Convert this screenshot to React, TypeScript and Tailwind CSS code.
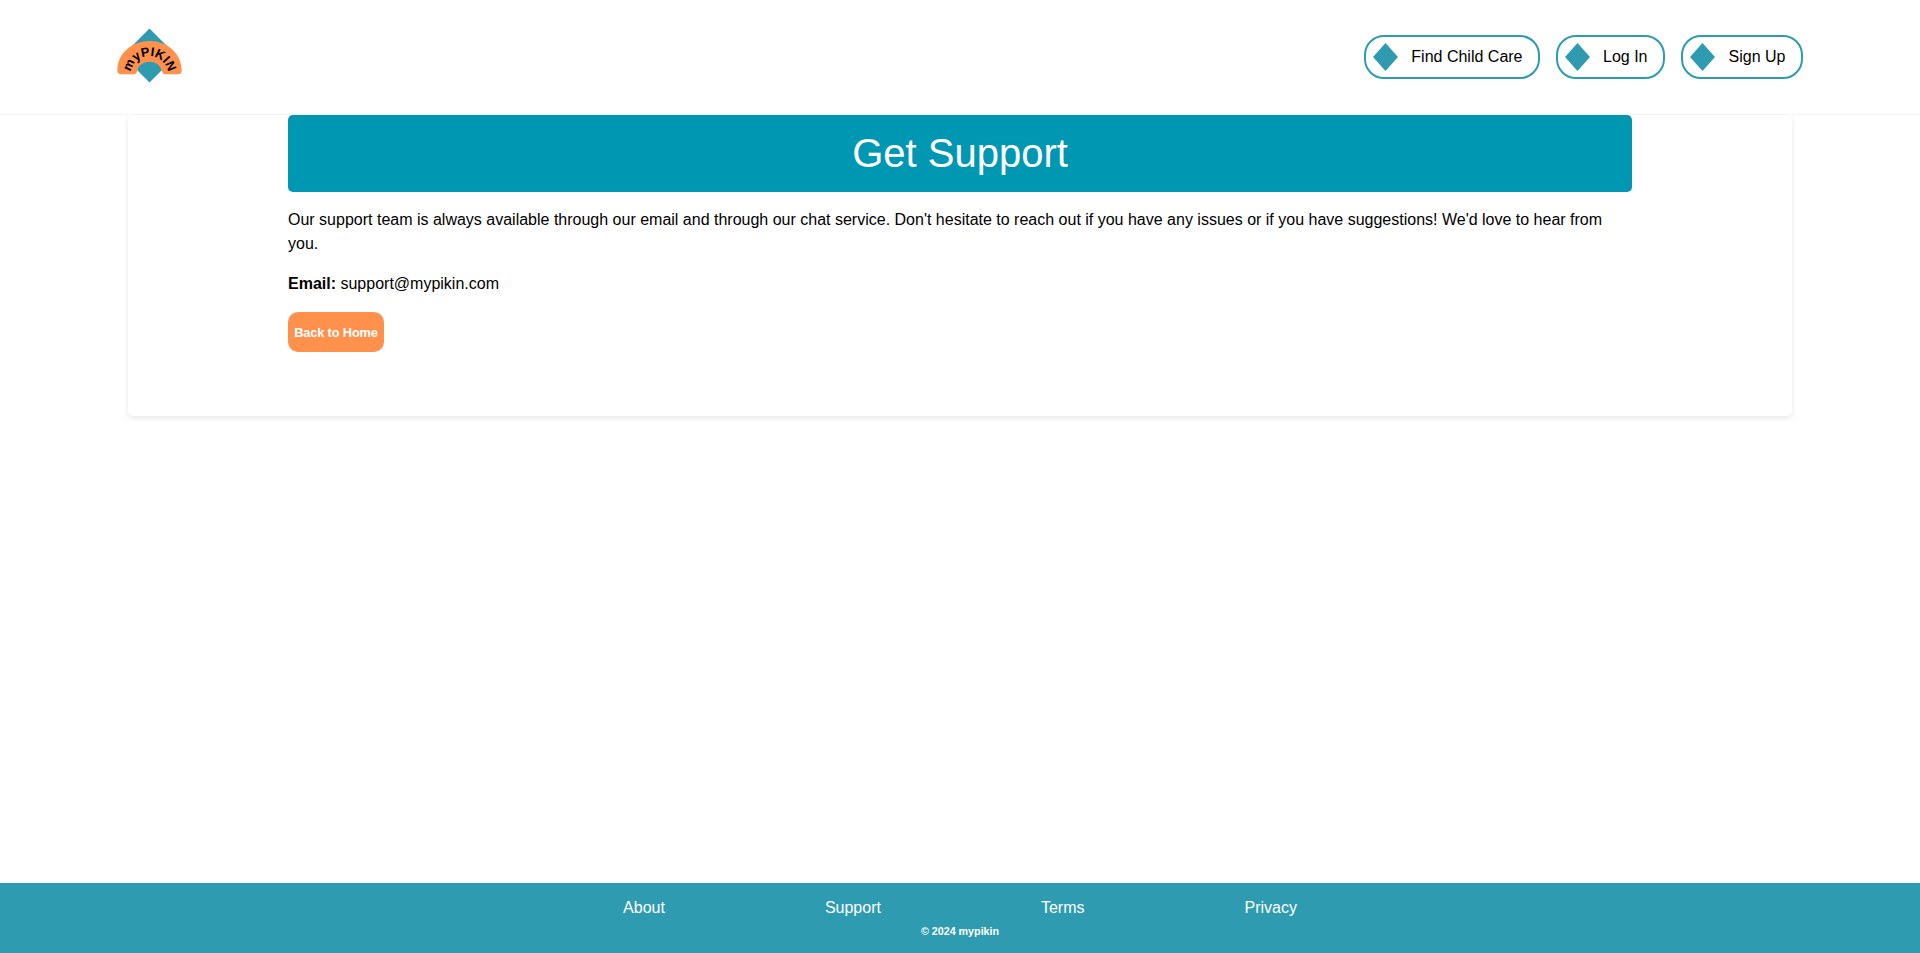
const navItems = [
  { label: "Find Child Care", width: "w-[176px]" },
  { label: "Log In", width: "w-[109px]" },
  { label: "Sign Up", width: "w-[122px]" },
];

const footerLinks = ["About", "Support", "Terms", "Privacy"];

function Logo() {
  return (
    <svg width="66" height="58" viewBox="116 27 66 58" role="img" aria-label="myPIKIN">
      <path d="M149.5 28.6 176.5 55.6 149.5 82.6 122.5 55.6Z" fill="#2f9bb0" />
      <path
        d="M121 74.3Q117.3 74.3 117.3 70C117.8 53 132 41 149.5 41S181.2 53 181.7 70Q181.7 74.3 178 74.3H165Q162.5 74.3 161.7 70.5C160.5 65.5 156 61.7 149.5 61.7S138.5 65.5 137.3 70.5Q136.5 74.3 134 74.3Z"
        fill="#ff914d"
      />
      <path id="logo-arc" d="M130.7 75A18.8 18.8 0 0 1 168.3 75" fill="none" />
      <text fontFamily="Liberation Sans, sans-serif" fontWeight="700" fontSize="12.8" fill="#000">
        <textPath href="#logo-arc" startOffset="50%" textAnchor="middle" textLength="53">
          myPIKIN
        </textPath>
      </text>
    </svg>
  );
}

function Diamond() {
  return (
    <svg width="25" height="28" viewBox="0 0 25 28" aria-hidden="true">
      <path d="M12.5 0 25 14 12.5 28 0 14Z" fill="#2f9bb0" />
    </svg>
  );
}

export default function App() {
  return (
    <div className="flex min-h-screen flex-col bg-white font-['Liberation_Sans',Arial,sans-serif] text-base text-black">
      <header className="flex h-[115px] items-start justify-between border-b border-[#f8f8f2] pr-[117px] pl-[116px]">
        <a href="#" className="mt-[27px]">
          <Logo />
        </a>
        <nav className="mt-[35px] flex gap-4">
          {navItems.map((item) => (
            <a
              key={item.label}
              href="#"
              className={`flex h-11 items-center justify-between rounded-[20px] border-2 border-[#2f9bb0] pr-[15.5px] pl-[7px] whitespace-nowrap ${item.width}`}
            >
              <Diamond />
              <span>{item.label}</span>
            </a>
          ))}
        </nav>
      </header>

      <main className="mx-32 h-[301px] rounded-[5px] px-40 shadow-[0_2px_5px_rgba(0,0,0,0.1)]">
        <h1 className="flex h-[77px] items-center justify-center rounded-[5px] bg-[#0097b2] pb-0.5 text-[40px] text-white">
          Get Support
        </h1>
        <p className="mt-4 leading-6">
          Our support team is always available through our email and through our chat service. Don't hesitate to reach
          out if you have any issues or if you have suggestions! We'd love to hear from you.
        </p>
        <p className="mt-4 leading-6">
          <strong>Email:</strong> support@mypikin.com
        </p>
        <button className="mt-4 h-10 w-24 rounded-[10px] bg-[#ff914d] pt-0.5 text-[12.8px] font-bold tracking-[-0.14px] whitespace-nowrap text-white">
          Back to Home
        </button>
      </main>

      <footer className="mt-auto flex h-[70px] flex-col items-center bg-[#2f9bb0] pt-[13px] text-white">
        <div className="flex gap-40">
          {footerLinks.map((link) => (
            <a key={link} href="#">
              {link}
            </a>
          ))}
        </div>
        <p className="mt-[3px] text-[10.72px] leading-4 font-bold">© 2024 mypikin</p>
      </footer>
    </div>
  );
}
